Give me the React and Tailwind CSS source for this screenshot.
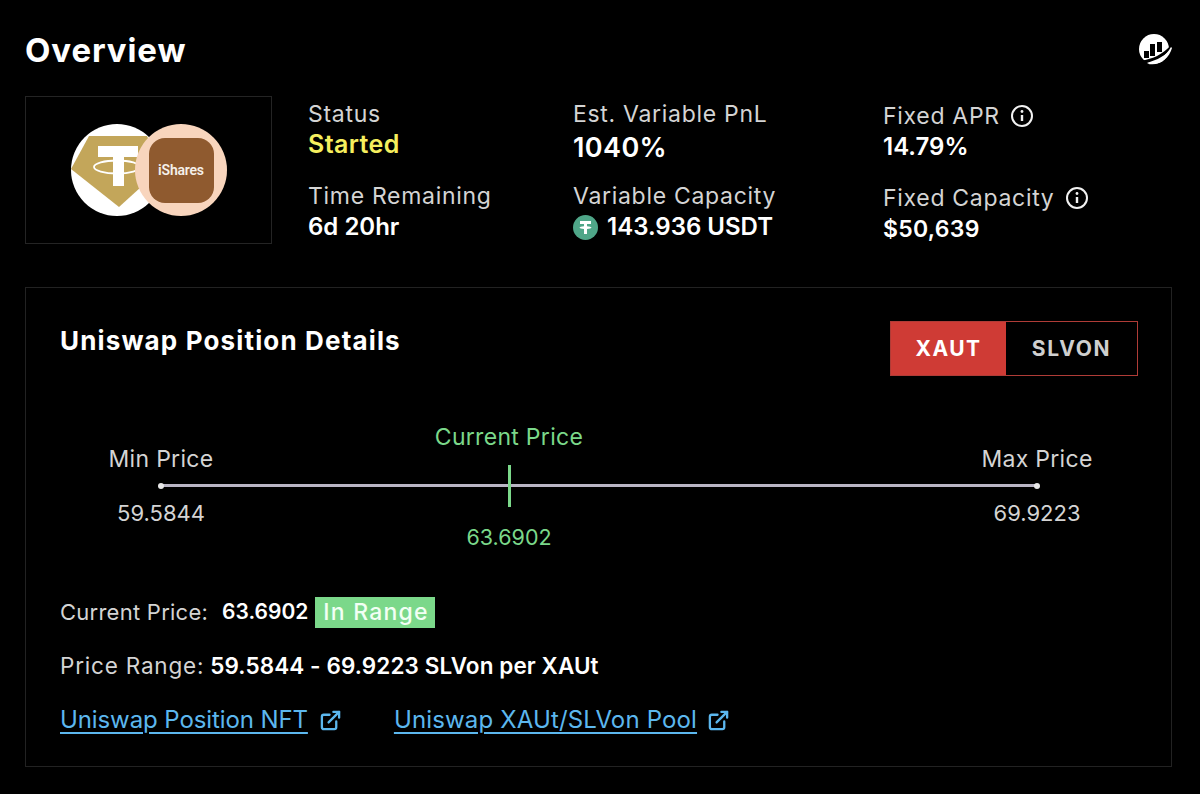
import React from "react";
import { ExternalLink } from "lucide-react";

const InfoIcon = () => (
  <svg width="24" height="24" viewBox="0 0 24 24" fill="none" stroke="#f2f2f2" strokeWidth="2">
    <circle cx="12" cy="12" r="10" />
    <path d="M12 11v6" strokeWidth="2.4" />
    <circle cx="12" cy="7.5" r="1.4" fill="#f2f2f2" stroke="none" />
  </svg>
);

const TetherGold = () => (
  <svg width="92" height="92" viewBox="0 0 92 92" className="shrink-0">
    <circle cx="46" cy="46" r="46" fill="#fff" />
    <path d="M18 12H76L92 43L48 83L0 45Z" fill="#c3a65a" />
    <path d="M27 22H67V33H53V62H42V33H27Z" fill="#fff" />
    <ellipse cx="46" cy="43" rx="23" ry="6.5" fill="none" stroke="#fff" strokeWidth="1.8" />
  </svg>
);

const Stat = ({ label, children, icon, valueClass = "text-[24px]", className = "" }) => (
  <div className={`flex flex-col ${className}`}>
    <div className="flex items-center gap-[10px] h-[30px] text-[23px] text-[#d4d4d4] tracking-[0.7px]">
      <span>{label}</span>
      {icon && <InfoIcon />}
    </div>
    <div className={`h-[30px] mt-[1px] flex items-center font-semibold ${valueClass}`}>{children}</div>
  </div>
);

const PriceMark = ({ label, value, className = "" }) => (
  <div className={`flex flex-col items-center gap-[13px] ${className}`}>
    <div className="h-[24px] leading-[26px] text-[23px] tracking-[0.3px] text-[#d4d4d4] whitespace-nowrap">{label}</div>
    <div className="w-[6px] h-[6px] rounded-full bg-[#e8e8e8]" />
    <div className="h-[24px] leading-[22px] text-[22px] text-[#d4d4d4]">{value}</div>
  </div>
);

const App = () => {
  return (
    <div className="w-[1200px] h-[794px] bg-black text-white font-['Inter',sans-serif] px-[25px] pt-[28px] overflow-hidden">
      <div className="flex items-center justify-between h-[44px] pr-[3px]">
        <h1 className="text-[33px] font-bold tracking-[0.9px] pt-[2px]">Overview</h1>
        <svg width="34" height="34" viewBox="0 0 34 34">
          <circle cx="16" cy="16" r="15" fill="#fff" />
          <path d="M6 18h5v7H6zM12 11h5v12h-5zM19 9h5v10h-5z" fill="#000" />
          <path d="M3 29C15 28 26 23 36 11" fill="none" stroke="#000" strokeWidth="3" />
          <path d="M9 30.5C19 29 28 23 33 14L34 15C31 26 20 34 9 30.5Z" fill="#fff" />
        </svg>
      </div>

      <div className="flex mt-[24px] h-[148px]">
        <div className="w-[247px] h-[148px] border border-[#242424] relative flex items-center pl-[45px] shrink-0">
          <TetherGold />
          <div className="w-[92px] h-[92px] -ml-[28px] relative rounded-full bg-[#f8d5bd] flex items-center justify-center shrink-0">
            <div className="w-[65px] h-[65px] rounded-[16px] bg-[#8f5a2f] flex items-center justify-center text-[14px] font-semibold text-[#f5f0ea] tracking-[-0.2px] font-['Roboto',sans-serif]">
              iShares
            </div>
          </div>
        </div>

        <div className="flex flex-col w-[265px] ml-[36px] pt-[3px] gap-[21px]">
          <Stat label="Status" valueClass="text-[25px] tracking-[0.4px] text-[#f6ef5e]">Started</Stat>
          <Stat label="Time Remaining">6d 20hr</Stat>
        </div>
        <div className="flex flex-col w-[310px] pt-[3px] gap-[21px]">
          <Stat label="Est. Variable PnL" valueClass="text-[27px] tracking-[0.4px] pt-[7px]">1040%</Stat>
          <Stat label="Variable Capacity" valueClass="text-[24px]">
            <span className="w-[25px] h-[25px] rounded-full bg-[#4fa688] flex items-center justify-center mr-[9px]">
              <svg width="17" height="17" viewBox="0 0 17 17" fill="#fff">
                <path d="M3 2h11v3H10v2.2c2.4.2 4.5.7 4.5 1.4S12.4 9.8 10 10v5H7v-5C4.6 9.8 2.5 9.3 2.5 8.6S4.6 7.4 7 7.2V5H3z" />
              </svg>
            </span>
            143.936 USDT
          </Stat>
        </div>
        <div className="flex flex-col pt-[5px] gap-[21px]">
          <Stat label="Fixed APR" icon>14.79%</Stat>
          <Stat label="Fixed Capacity" icon valueClass="text-[23px] tracking-[0.3px]">$50,639</Stat>
        </div>
      </div>

      <div className="w-[1147px] h-[480px] mt-[43px] border border-[#222] pl-[34px] pr-[33px] pt-[33px]">
        <div className="flex justify-between items-start">
          <h2 className="text-[26px] font-bold tracking-[1.15px] leading-[40px]">Uniswap Position Details</h2>
          <div className="flex w-[248px] h-[55px] border border-[#b03c37]">
            <div className="w-[115px] bg-[#cf3b35] flex items-center justify-center text-[21px] font-bold tracking-[1.4px]">XAUT</div>
            <div className="flex-1 flex items-center justify-center text-[21px] font-bold tracking-[1.7px] text-[#cfcfcf]">SLVON</div>
          </div>
        </div>

        <div className="relative flex items-center mt-[47px] h-[126px]">
          <div className="absolute left-[101px] w-[876px] top-[61px] h-[3px] bg-[#b9b5c4]" />
          <PriceMark label="Min Price" value="59.5844" className="relative w-[104px] ml-[49px]" />
          <div className="relative w-[150px] ml-[221px] flex flex-col items-center text-[#7bd88a] gap-[18px]">
            <div className="h-[24px] leading-[28px] text-[23px] tracking-[0.3px] whitespace-nowrap">Current Price</div>
            <div className="w-[3px] h-[42px] bg-[#7bd88a]" />
            <div className="h-[24px] leading-[24px] text-[21.5px]">63.6902</div>
          </div>
          <PriceMark label="Max Price" value="69.9223" className="relative w-[112px] ml-[397px]" />
        </div>

        <div className="flex items-center mt-[46px] h-[34px] text-[22px] tracking-[0.25px] text-[#d4d4d4]">
          <span>Current Price:</span>
          <span className="ml-[14px] text-[21px] tracking-normal font-semibold text-white">63.6902</span>
          <span className="ml-[7px] bg-[#7bd88a] text-[#f2fff4] text-[23px] font-medium tracking-[1.2px] h-[31px] leading-[31px] pl-[8px] pr-[6px]">In Range</span>
        </div>
        <div className="flex items-center mt-[20px] h-[34px] text-[22.5px] tracking-[0.8px] text-[#d4d4d4]">
          <span>Price Range:</span>
          <span className="ml-[6px] font-semibold text-white tracking-[0.1px]">59.5844 - 69.9223 SLVon per XAUt</span>
        </div>
        <div className="flex items-center mt-[20px] h-[34px] text-[24px] text-[#5cb7ee]">
          <a className="underline underline-offset-4 decoration-2 tracking-[-0.1px]">Uniswap Position NFT</a>
          <ExternalLink size={23} strokeWidth={2.4} className="ml-[11px]" />
          <a className="underline underline-offset-4 decoration-2 tracking-[0.15px] ml-[52px]">Uniswap XAUt/SLVon Pool</a>
          <ExternalLink size={23} strokeWidth={2.4} className="ml-[10px]" />
        </div>
      </div>
    </div>
  );
};

export default App;
